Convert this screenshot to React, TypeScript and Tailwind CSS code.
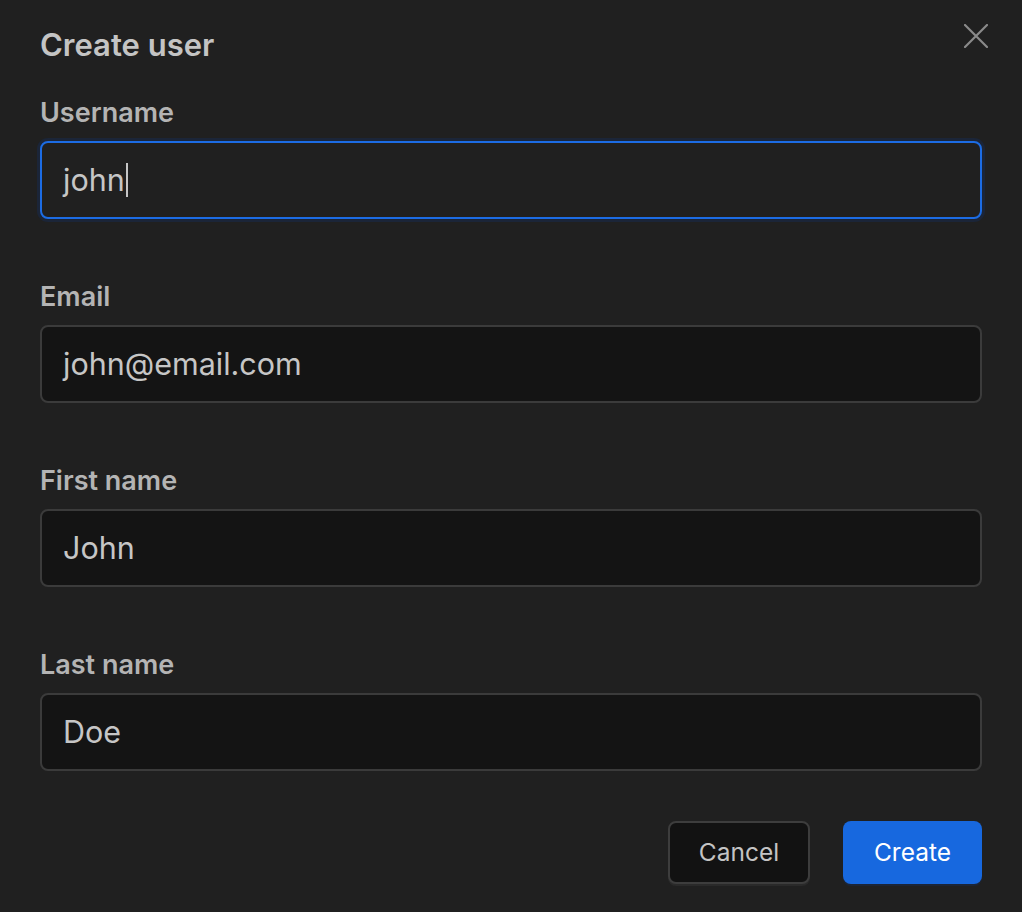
import { useState } from "react";

const font = { fontFamily: "Inter, 'Noto Sans', sans-serif" };

function Field({ label, value, focused }: { label: string; value: string; focused?: boolean }) {
  return (
    <div className="flex flex-col">
      <label className="text-[27px] leading-[32px] font-semibold text-[#b4b4b4]">{label}</label>
      <div
        className={`mt-3 h-[78px] rounded-[8px] border-2 flex items-center pl-[21px] ${
          focused
            ? "border-[#1c6ce4] bg-[#202020] shadow-[0_0_0_3px_#1b2538]"
            : "border-[#3b3b3b] bg-[#141414]"
        }`}
      >
        <span className="text-[30.5px] leading-none text-[#c6c6c6]">{value}</span>
        {focused && <span className="w-[2px] h-[34px] bg-[#c6c6c6] ml-[1px]" />}
      </div>
    </div>
  );
}

export default function App() {
  const [open] = useState(true);
  if (!open) return null;

  return (
    <div className="w-[1022px] h-[912px] bg-[#202020] px-10 relative" style={font}>
      {/* Header */}
      <div className="pt-[26px] flex items-start justify-between">
        <h2 className="text-[31px] leading-[37px] font-semibold text-[#c4c4c4]">Create user</h2>
        <button className="absolute right-[34px] top-[24px] text-[#8a8a8a]">
          <svg width="24" height="24" viewBox="0 0 24 24" fill="none" stroke="currentColor" strokeWidth="2.2" strokeLinecap="round">
            <path d="M1 1 L23 23 M23 1 L1 23" />
          </svg>
        </button>
      </div>

      <div className="mt-[34px] flex flex-col gap-[62px]">
        <Field label="Username" value="john" focused />
        <Field label="Email" value="john@email.com" />
        <Field label="First name" value="John" />
        <Field label="Last name" value="Doe" />
      </div>

      {/* Footer */}
      <div className="mt-[50px] flex justify-end gap-[33px]">
        <button className="w-[142px] h-[63px] rounded-[8px] border-2 border-[#3d3d3d] bg-[#121212] text-[24.5px] text-[#c4c4c4] shadow-[0_2px_0_#2a2a2a]">
          Cancel
        </button>
        <button className="w-[139px] h-[63px] rounded-[8px] bg-[#1768df] text-[24.5px] text-white shadow-[0_2px_0_#1c2536]">
          Create
        </button>
      </div>
    </div>
  );
}
